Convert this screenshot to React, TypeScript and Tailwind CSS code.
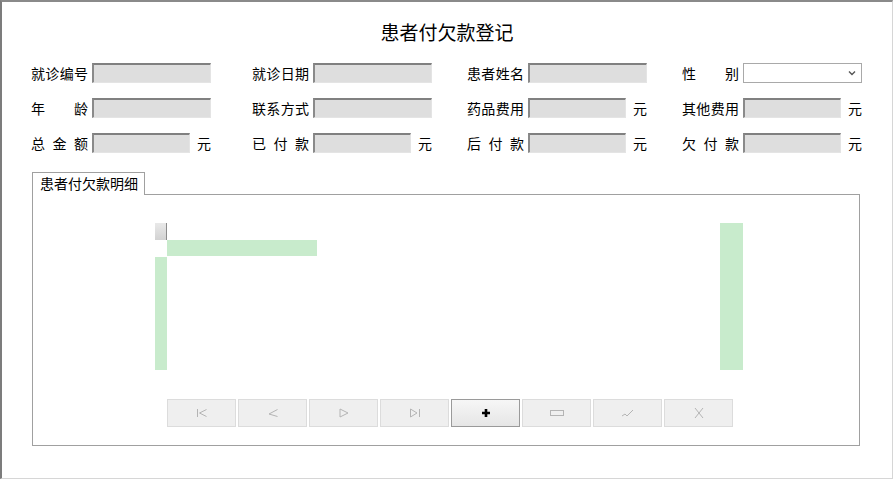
import React from "react";

const FONT = "font-['Noto_Sans_CJK_SC','Noto_Sans',sans-serif]";

function Label({ text }: { text: string }) {
  return (
    <div className="flex w-[57px] justify-between">
      {text.split("").map((c, i) => (
        <span key={i}>{c}</span>
      ))}
    </div>
  );
}

function Box({ w }: { w: string }) {
  return (
    <div
      className={`${w} h-[20px] bg-[#dedede] border-t-2 border-l-2 border-t-[#808080] border-l-[#8a8a8a] border-b border-r border-b-[#e4e4e4] border-r-[#e4e4e4]`}
    />
  );
}

function Field({ label, unit }: { label: string; unit?: boolean }) {
  return (
    <div className="flex items-center h-[20px]">
      <Label text={label} />
      <div className="ml-[4px] flex items-center">
        {unit ? (
          <>
            <Box w="w-[98px]" />
            <span className="ml-[7px]">元</span>
          </>
        ) : (
          <Box w="w-[119px]" />
        )}
      </div>
    </div>
  );
}

function SexField() {
  return (
    <div className="flex items-center h-[20px]">
      <Label text="性别" />
      <div className="ml-[4px] w-[119px] h-[20px] bg-white border border-[#a9a9a9] flex items-center justify-end pr-[5px]">
        <svg width="8" height="6" viewBox="0 0 8 6">
          <path d="M1 1.5 L4 4.5 L7 1.5" fill="none" stroke="#555" strokeWidth="1.4" />
        </svg>
      </div>
    </div>
  );
}

const G = "#b4b4b4";

const icons: React.ReactNode[] = [
  <svg width="12" height="10" viewBox="0 0 12 10" key="first">
    <path d="M1.5 1 V9 M10.5 1.5 L3.5 5 L10.5 8.5" fill="none" stroke={G} strokeWidth="1" />
  </svg>,
  <svg width="12" height="10" viewBox="0 0 12 10" key="prev">
    <path d="M10.5 1.5 L2 6 L10.5 8.5" fill="none" stroke={G} strokeWidth="1" />
  </svg>,
  <svg width="12" height="10" viewBox="0 0 12 10" key="next">
    <path d="M2 1 V9 L10 5 Z" fill="none" stroke={G} strokeWidth="1" />
  </svg>,
  <svg width="12" height="10" viewBox="0 0 12 10" key="last">
    <path d="M1.5 1 V9 L8 5 Z M10.5 1 V9" fill="none" stroke={G} strokeWidth="1" />
  </svg>,
  <svg width="10" height="10" viewBox="0 0 10 10" key="add">
    <path d="M5 1 V9 M1 5 H9" fill="none" stroke="#000" strokeWidth="2.6" />
  </svg>,
  <svg width="14" height="6" viewBox="0 0 14 6" key="del">
    <rect x="0.5" y="0.5" width="13" height="5" fill="none" stroke={G} strokeWidth="1" />
  </svg>,
  <svg width="14" height="10" viewBox="0 0 14 10" key="ok">
    <path d="M1 8 L4 6 L6 8 L12 2" fill="none" stroke={G} strokeWidth="1" />
  </svg>,
  <svg width="12" height="12" viewBox="0 0 12 12" key="cancel">
    <path d="M2 1 L10 11 M10 1 L2 11" fill="none" stroke={G} strokeWidth="1" />
  </svg>,
];

export default function App() {
  return (
    <div className={`w-[895px] h-[480px] bg-white text-[14px] text-black ${FONT}`}>
      <div className="w-[893px] h-[479px] border-l-2 border-t-2 border-l-[#7c7c7c] border-t-[#8a8a8a] border-r border-b border-r-[#d6d6d6] border-b-[#d6d6d6] flex flex-col">
        <div className="h-[42px] pt-[18px] flex justify-center text-[19px] leading-[24px]">
          患者付欠款登记
        </div>

        <div className="mt-[19px] pl-[29px] flex flex-col gap-[15px] leading-[20px]">
          <div className="grid grid-cols-[221px_215px_215px_auto]">
            <Field label="就诊编号" />
            <Field label="就诊日期" />
            <Field label="患者姓名" />
            <SexField />
          </div>
          <div className="grid grid-cols-[221px_215px_215px_auto]">
            <Field label="年龄" />
            <Field label="联系方式" />
            <Field label="药品费用" unit />
            <Field label="其他费用" unit />
          </div>
          <div className="grid grid-cols-[221px_215px_215px_auto]">
            <Field label="总金额" unit />
            <Field label="已付款" unit />
            <Field label="后付款" unit />
            <Field label="欠付款" unit />
          </div>
        </div>

        <div className="mt-[19px] ml-[30px] w-[828px] flex flex-col">
          <div className="flex">
            <div className="relative z-10 h-[23px] w-[113px] border border-b-0 border-[#a0a0a0] bg-white pl-[7px] leading-[21px] -mb-px">
              患者付欠款明细
            </div>
          </div>
          <div className="h-[252px] border border-[#a0a0a0] bg-white pt-[28px]">
            <div className="flex items-start pl-[122px]">
              <div className="w-[12px] flex flex-col">
                <div className="h-[17px] bg-gradient-to-b from-[#e9e9e9] to-[#d2d2d2] border-r border-r-[#8c8c8c]" />
                <div className="h-[17px]" />
                <div className="h-[113px] bg-[#c8ebcc]" />
              </div>
              <div className="mt-[17px] w-[150px] h-[16px] bg-[#c8ebcc]" />
              <div className="ml-[403px] w-[23px] h-[147px] bg-[#c8ebcc]" />
            </div>

            <div className="mt-[29px] pl-[134px] flex gap-[2px]">
              {icons.map((ic, i) => (
                <div
                  key={i}
                  className={
                    i === 4
                      ? "w-[69px] h-[28px] flex items-center justify-center border border-[#9a9a9a] bg-gradient-to-b from-[#f6f6f6] to-[#e6e6e6]"
                      : "w-[69px] h-[28px] flex items-center justify-center border border-[#dcdcdc] bg-[#efefef]"
                  }
                >
                  {ic}
                </div>
              ))}
            </div>
          </div>
        </div>
      </div>
    </div>
  );
}
